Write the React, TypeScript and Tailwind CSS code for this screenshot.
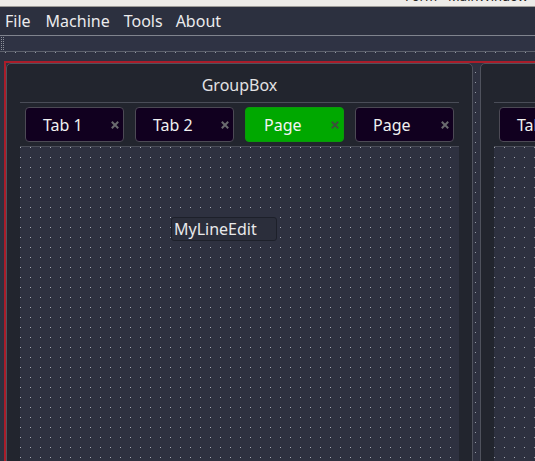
import React from "react";

function CloseX({ color }: { color: string }) {
  return (
    <svg width="8" height="8" viewBox="0 0 8 8" className="absolute right-[4px] top-1/2 -translate-y-1/2">
      <path d="M0.8 0.8 L7.2 7.2 M7.2 0.8 L0.8 7.2" stroke={color} strokeWidth="2" strokeLinecap="butt" />
    </svg>
  );
}

function Tab({ label, active }: { label: string; active?: boolean }) {
  return (
    <div
      className={
        active
          ? "relative shrink-0 w-[99px] h-[35px] rounded-[4px] border border-[#0a9a0a] bg-[#00a800] flex items-center pl-[18px] text-[16px] text-[#f4f4f4]"
          : "relative shrink-0 w-[99px] h-[35px] rounded-[4px] border border-[#4c4a55] bg-[#11001f] flex items-center pl-[17px] text-[16px] text-[#f0f0f0]"
      }
    >
      <span>{label}</span>
      <CloseX color={active ? "#3a523a" : "#6a6a6e"} />
    </div>
  );
}

function GroupBox({ width, withEdit }: { width: string; withEdit?: boolean }) {
  return (
    <div
      className={
        (width === "a" ? "w-[467px]" : "w-[480px] ml-[7px]") +
        " shrink-0 h-[520px] border border-[#4f525d] rounded-[5px] bg-[#22252e] flex flex-col px-[13px]"
      }
    >
      <div className="mt-[10px] h-[22px] leading-[22px] text-center text-[16px] text-[#e2e2e4]">GroupBox</div>
      <div className="mt-[6px] h-px bg-[#4a4d58]" />
      <div className="mt-[4px] flex gap-[11px] pl-[5px]">
        <Tab label="Tab 1" />
        <Tab label="Tab 2" />
        <Tab label="Page" active />
        <Tab label="Page" />
      </div>
      <div className="relative mt-[4px] flex-1 border-t border-[#4a4d58] bg-[#2e3140] bg-[conic-gradient(from_270deg_at_1px_1px,#a0a4ae_25%,transparent_0)] bg-[length:10px_10px]">
        {withEdit && (
          <div className="absolute left-[151px] top-[70px] w-[106px] h-[24px] border border-[#1d202a] rounded-[3px] bg-[#2b2e3b] pl-[2px] text-[16px] leading-[22px] text-[#e8e8ea]">
            MyLineEdit
          </div>
        )}
      </div>
    </div>
  );
}

export default function App() {
  return (
    <div className="w-[535px] h-[461px] overflow-hidden flex flex-col bg-[#2e3140] font-['Noto_Sans',sans-serif]">
      <div className="relative h-[7px] shrink-0 overflow-hidden bg-[#edebe8] border-b border-[#9d9b97]">
        <div className="absolute left-[405px] top-[-12px] text-[13px] leading-[16px] text-[#222] whitespace-nowrap">
          Form - MainWindow
        </div>
      </div>
      <div className="h-[28px] shrink-0 bg-[#2c303f] flex items-center text-[16px] text-[#ebebed]">
        <span className="ml-[5px]">File</span>
        <span className="ml-[15px]">Machine</span>
        <span className="ml-[14px]">Tools</span>
        <span className="ml-[13px]">About</span>
      </div>
      <div className="h-[17px] shrink-0 bg-[#2f3344] border-t border-b border-t-[#80848e] border-b-[#5d616c] flex items-center">
        <div className="ml-[1px] w-[4px] h-[13px] bg-[conic-gradient(from_270deg_at_1px_1px,#8c909a_25%,transparent_0)] bg-[length:2px_2px]" />
      </div>
      <div className="flex-1 overflow-hidden bg-[#2e3140] bg-[conic-gradient(from_270deg_at_1px_1px,#9298a4_25%,transparent_0)] bg-[length:10px_10px] bg-[position:5px_0px] pt-[9px] pl-[4px]">
        <div className="flex w-[700px] h-[520px] border-t-2 border-l-2 border-[#a91d2a]">
          <GroupBox width="a" withEdit />
          <GroupBox width="b" />
        </div>
      </div>
    </div>
  );
}
